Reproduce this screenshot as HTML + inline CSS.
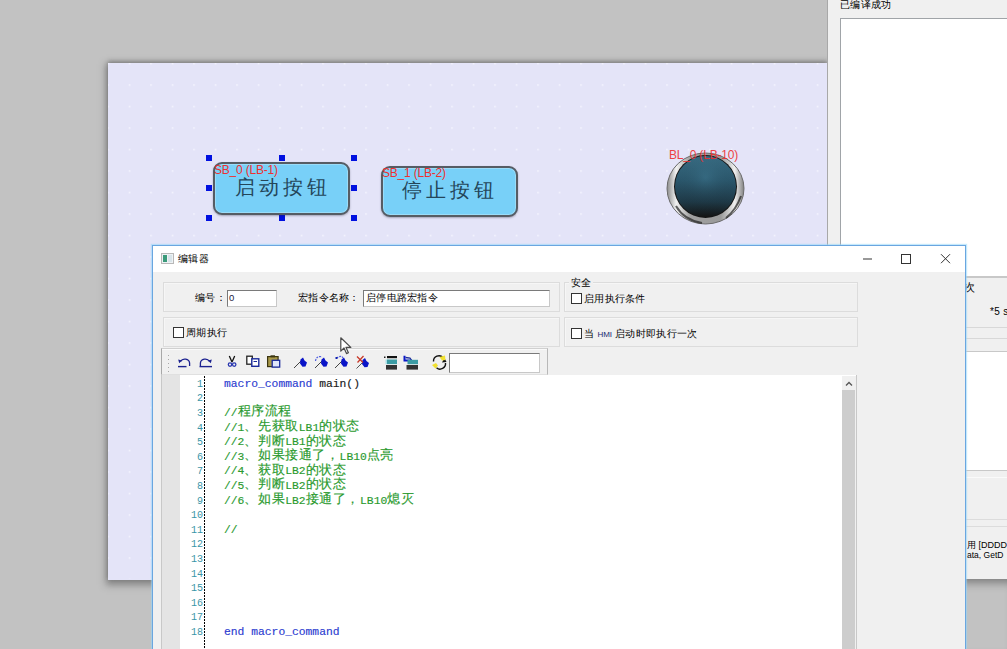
<!DOCTYPE html>
<html><head><meta charset="utf-8">
<style>
*{box-sizing:border-box;margin:0;padding:0}
html,body{width:1007px;height:649px;overflow:hidden}
body{position:relative;background:#c2c2c2;font-family:"Liberation Sans",sans-serif;font-size:11px;color:#000}
.a{position:absolute}
#canvas{left:108px;top:63px;width:719px;height:517px;background-color:#e4e4f8;
 box-shadow:0 3px 7px 2px rgba(70,70,70,.5),0 -2px 4px rgba(60,60,60,.35)}
#rp{left:827px;top:0;width:180px;height:649px;background:#f0f0f0;border-left:1px solid #a8a8a8}
.h{background:#0010e0;width:6px;height:6px}
.btn{border:2px solid #565c64;border-radius:9px;background:#78d0f8;box-shadow:inset 0 0 0 1px #9adcf8,0 1px 2px rgba(40,40,60,.35)}
.btxt{font-size:20px;color:#24465a;letter-spacing:4px;white-space:nowrap}
.lbl{color:#ee3030;font-size:12px;white-space:nowrap;letter-spacing:-0.2px}
#dlg{left:152px;top:245px;width:814px;height:410px;background:#f0f0f0;border:1px solid #7ab4e8}
#title{left:0;top:0;width:812px;height:26px;background:#fff}
.gb{border:1px solid #dcdcdc;box-shadow:inset 1px 1px 0 #f6f6f6}
.inp{background:#fff;border:1px solid #7a7a7a;border-right-color:#c8c8c8;border-bottom-color:#c8c8c8}
.cb{width:11px;height:11px;border:1px solid #333;background:#fff}
.t{white-space:nowrap;color:#000;font-weight:500;font-size:10px;letter-spacing:0.3px}
.ln{left:170px;width:33px;text-align:right;font-family:"Liberation Mono",monospace;font-size:10px;line-height:14.6px;color:#3a96a8}
.code{left:224px;margin-top:-1px;font-family:"Liberation Mono",monospace;font-size:11.33px;line-height:14.6px;white-space:pre;font-weight:normal;-webkit-text-stroke:0.15px currentColor}
.code .b{color:#2c3cd0}.code .k{color:#202020}.code .g{color:#2a9a2e}
.cj{font-size:13px;letter-spacing:0.6px;font-weight:400;line-height:10px;position:relative;top:-0.5px}
</style></head><body>
<div id="canvas" class="a"></div>
<svg class="a" style="left:108px;top:63px" width="719" height="516"><defs><pattern id="dots" x="-0.75" y="-0.25" width="21.5" height="21.5" patternUnits="userSpaceOnUse"><rect x="0" y="0" width="1.5" height="1.5" fill="#f6f6ff"/></pattern></defs><rect width="719" height="516" fill="url(#dots)"/></svg>


<!-- canvas objects -->
<div class="a h" style="left:206px;top:155px"></div>
<div class="a h" style="left:279px;top:155px"></div>
<div class="a h" style="left:351px;top:155px"></div>
<div class="a h" style="left:206px;top:185px"></div>
<div class="a h" style="left:351px;top:185px"></div>
<div class="a h" style="left:206px;top:215px"></div>
<div class="a h" style="left:279px;top:215px"></div>
<div class="a h" style="left:351px;top:215px"></div>
<div class="a btn" style="left:213px;top:162px;width:137px;height:53px"></div>
<div class="a btxt" style="left:235px;top:174px">启动按钮</div>
<svg class="a" style="left:662px;top:148px" width="88" height="82" viewBox="0 0 88 82">
<defs>
<linearGradient id="ring" x1="0" y1="0" x2="1" y2="0">
<stop offset="0" stop-color="#8a8a8a"/><stop offset="0.12" stop-color="#f2f2f2"/><stop offset="0.3" stop-color="#a0a0a0"/>
<stop offset="0.7" stop-color="#9a9a9a"/><stop offset="0.88" stop-color="#f0f0f0"/><stop offset="1" stop-color="#808080"/></linearGradient>
<linearGradient id="ball" x1="0" y1="0" x2="0" y2="1">
<stop offset="0" stop-color="#3a7088"/><stop offset="0.4" stop-color="#2c5a70"/><stop offset="0.75" stop-color="#1f3a48"/><stop offset="1" stop-color="#141414"/></linearGradient>
<radialGradient id="ballr" cx="0.5" cy="0.35" r="0.6">
<stop offset="0" stop-color="#4a8aa4" stop-opacity=".25"/><stop offset="1" stop-color="#000" stop-opacity="0"/></radialGradient>
</defs>
<ellipse cx="43.5" cy="40.5" rx="38.5" ry="35.5" fill="url(#ring)" stroke="#6a6a6a" stroke-width="1"/>
<path d="M14 58 Q22 72 40 75" stroke="#202020" stroke-width="2" fill="none" opacity=".7"/>
<path d="M79 48 Q74 62 64 70" stroke="#202020" stroke-width="2" fill="none" opacity=".7"/>
<circle cx="43.5" cy="38.5" r="31.5" fill="#151515"/>
<circle cx="43.5" cy="38.5" r="30.5" fill="url(#ball)"/>
<circle cx="43.5" cy="38.5" r="30.5" fill="url(#ballr)"/>
</svg>
<div class="a lbl" style="left:669px;top:148px;opacity:.9">BL_0 (LB-10)</div>
<div class="a lbl" style="left:214px;top:163px">SB_0 (LB-1)</div>
<div class="a btn" style="left:381px;top:166px;width:137px;height:51px"></div>
<div class="a btxt" style="left:402px;top:177px">停止按钮</div>
<div class="a lbl" style="left:382px;top:166px">SB_1 (LB-2)</div>


<div id="rp" class="a">
 <div class="a t" style="left:12px;top:-2px;font-size:10px">已编译成功</div>
 <div class="a" style="left:12px;top:18px;width:170px;height:260px;background:#fff;border:1px solid #a0a4a8;border-right:0"></div>
 <div class="a" style="left:0;top:276px;width:180px;height:76px;background:#f0f0f0;border-top:2px solid #c8c8c8;border-bottom:1px solid #c8c8c8"></div>
 <div class="a" style="left:0;top:327px;width:180px;height:1px;background:#d8d8d8"></div>
 <div class="a" style="left:0;top:338px;width:180px;height:1px;background:#d8d8d8"></div>
 <div class="a t" style="left:136px;top:281px;font-size:10.5px">次</div>
 <div class="a t" style="left:162px;top:306px;font-size:10px">*5 s</div>
 <div class="a" style="left:0;top:352px;width:180px;height:118px;background:#fff"></div>
 <div class="a" style="left:0;top:470px;width:180px;height:110px;background:#f0f0f0;border-top:1px solid #c8c8c8"></div>
 <div class="a" style="left:0;top:477px;width:180px;height:1px;background:#fafafa"></div>
 <div class="a" style="left:0;top:519px;width:180px;height:1px;background:#dcdcdc"></div>
 <div class="a" style="left:0;top:526px;width:180px;height:1px;background:#dcdcdc"></div>
 <div class="a t" style="left:139px;top:539px;font-size:9px;letter-spacing:0">用 [DDDD</div>
 <div class="a t" style="left:139px;top:550px;font-size:8.5px;letter-spacing:0">ata, GetD</div>
 <div class="a" style="left:0;top:579px;width:180px;height:70px;background:#c2c2c2;box-shadow:inset 4px 6px 8px -2px rgba(60,60,60,.5)"></div>
</div>

<!-- dialog -->
<div class="a" style="left:152px;top:245px;width:814px;height:420px;background:#f0f0f0;border:1px solid #6aa6e0;box-shadow:0 0 1px 1px rgba(150,215,250,.55)"></div>
<div class="a" style="left:153px;top:246px;width:812px;height:26px;background:#fff"></div>
<div class="a" style="left:161px;top:253px;width:13px;height:11px;border:1px solid #b8b8b8;background:#eef2f4"></div>
<div class="a" style="left:163px;top:255px;width:4px;height:7px;background:#3a9a7a"></div>
<div class="a" style="left:168px;top:255px;width:4px;height:7px;background:#d8e4ea"></div>
<div class="a t" style="left:178px;top:252px">编辑器</div>
<div class="a" style="left:863px;top:258px;width:9px;height:1.5px;background:#999"></div>
<div class="a" style="left:901px;top:254px;width:10px;height:9.5px;border:1.3px solid #333"></div>
<svg class="a" style="left:940px;top:253px" width="11" height="11" viewBox="0 0 11 11"><path d="M1 1.2L10 10.2M10 1.2L1 10.2" stroke="#333" stroke-width="1"/></svg>
<!-- group boxes -->
<div class="a gb" style="left:163px;top:282px;width:397px;height:30px"></div>
<div class="a gb" style="left:163px;top:317px;width:397px;height:30px"></div>
<div class="a gb" style="left:564px;top:282px;width:294px;height:30px"></div>
<div class="a gb" style="left:564px;top:317px;width:294px;height:30px"></div>
<div class="a t" style="left:195px;top:291px">编号：</div>
<div class="a inp" style="left:227px;top:290px;width:50px;height:17px"></div>
<div class="a t" style="left:229px;top:292px;font-size:9.5px;color:#1a1a40">0</div>
<div class="a t" style="left:298px;top:291px">宏指令名称：</div>
<div class="a inp" style="left:363px;top:290px;width:187px;height:17px"></div>
<div class="a t" style="left:366px;top:291px">启停电路宏指令</div>
<div class="a" style="left:569px;top:277px;width:24px;height:12px;background:#f0f0f0"></div>
<div class="a t" style="left:571px;top:276px">安全</div>
<div class="a cb" style="left:571px;top:293px"></div>
<div class="a t" style="left:584px;top:292px">启用执行条件</div>
<div class="a cb" style="left:173px;top:327px"></div>
<div class="a t" style="left:186px;top:326px">周期执行</div>
<div class="a cb" style="left:571px;top:328px"></div>
<div class="a t" style="left:584px;top:327px">当 <span style="font-size:8px;color:#1a2a70;font-weight:normal;letter-spacing:0">HMI</span> 启动时即执行一次</div>
<!-- toolbar -->
<div class="a" style="left:161px;top:348px;width:387px;height:27px;background:#f0f0f0;border:1px solid #d0d0d0;border-left-color:#a8a8a8;border-right-color:#b8b8b8;border-bottom:1px solid #e0e0e0;box-shadow:inset 0 1px 0 #fafafa"></div>
<div class="a inp" style="left:449px;top:353px;width:91px;height:20px"></div>
<svg class="a" style="left:161px;top:349px" width="290" height="26" viewBox="0 0 290 26">
<g fill="#a8a8a8"><rect x="7" y="6" width="1" height="1"/><rect x="7" y="10" width="1" height="1"/><rect x="7" y="14" width="1" height="1"/><rect x="7" y="18" width="1" height="1"/><rect x="7" y="22" width="1" height="1"/></g>
<!-- undo -->
<g stroke="#1c2290" fill="none" stroke-width="1.3">
<path d="M19.5 12.5 A4.8 4.3 0 0 1 28.6 14 L28.6 17"/>
<path d="M17 17.6 H25.5" stroke-width="1.4"/>
</g>
<path d="M17.2 10.5 L21 11.5 L18.2 14.3Z" fill="#1c2290"/>
<!-- redo -->
<g stroke="#1c2290" fill="none" stroke-width="1.3">
<path d="M48.5 12.5 A4.8 4.3 0 0 0 39.4 14 L39.4 17"/>
<path d="M38.5 17.6 H51" stroke-width="1.4"/>
</g>
<path d="M50.8 10.5 L47 11.5 L49.8 14.3Z" fill="#1c2290"/>
<!-- cut -->
<path d="M68.3 7 L71 13 M73.7 7 L71 13" stroke="#111" stroke-width="1.3" fill="none"/>
<circle cx="69" cy="15.6" r="1.7" stroke="#2a38b0" stroke-width="1.3" fill="none"/>
<circle cx="73.2" cy="15.6" r="1.7" stroke="#2a38b0" stroke-width="1.3" fill="none"/>
<!-- copy -->
<rect x="85.8" y="7.2" width="5.5" height="8" fill="#fff" stroke="#222" stroke-width="1.3"/>
<rect x="90.8" y="9.8" width="7" height="7.5" fill="#fff" stroke="#1a2a9a" stroke-width="1.4"/>
<path d="M92.5 12.5 H96" stroke="#1a2a9a" stroke-width="1"/>
<!-- paste -->
<rect x="106.6" y="7.6" width="10.5" height="10" fill="#a89848" stroke="#3a3410" stroke-width="1.2"/>
<rect x="109.5" y="6.3" width="4.5" height="2" fill="#3a3410"/>
<rect x="111.2" y="11.3" width="7.5" height="6.8" fill="#e0e6fa" stroke="#1a2a9a" stroke-width="1.3"/>
<!-- bookmark toggle -->
<path d="M133 19 L141.5 10.5" stroke="#444" stroke-width="1"/>
<path d="M139.5 10.5 L142 8.5 L143.5 11.5 L146 13.5 L144.5 17.5 L141.5 17.8 L139 14.5Z" fill="#0a14c8"/>
<!-- next bookmark -->
<path d="M154 19 L162.5 10.5" stroke="#444" stroke-width="1"/>
<path d="M160.5 10.5 L163 8.5 L164.5 11.5 L167 13.5 L165.5 17.5 L162.5 17.8 L160 14.5Z" fill="#0a14c8"/>
<path d="M154.5 12 Q155 7.5 159.5 7.5 L161 8.5" stroke="#5060e0" stroke-width="1.2" fill="none" stroke-dasharray="2 1"/>
<!-- prev bookmark -->
<path d="M174 19 L182.5 10.5" stroke="#444" stroke-width="1"/>
<path d="M180.5 10.5 L183 8.5 L184.5 11.5 L187 13.5 L185.5 17.5 L182.5 17.8 L180 14.5Z" fill="#0a14c8"/>
<path d="M175.5 9 Q178 7 181 7.5 L182 9" stroke="#5060e0" stroke-width="1.2" fill="none" stroke-dasharray="2 1"/>
<rect x="174.5" y="8" width="2" height="2" fill="#1020b0"/>
<!-- clear bookmarks -->
<path d="M195.5 19.5 L203.5 11.5" stroke="#555" stroke-width="1"/>
<path d="M201.5 11 L204 9 L205.5 12 L208 14 L206.5 18 L203.5 18.3 L201 15Z" fill="#0a14c8"/>
<path d="M196 7.5 L202 13.5 M202.5 7 L196.5 13.5" stroke="#c83a2a" stroke-width="1.3"/>
<!-- indent -->
<rect x="223" y="7.5" width="1.5" height="1.5" fill="#222"/>
<rect x="226" y="7" width="10" height="2.2" fill="#111"/>
<rect x="226" y="10.5" width="10" height="4.6" fill="#3c9ca4"/>
<rect x="224.5" y="10.5" width="1.5" height="4.6" fill="#a8e0e8"/>
<rect x="225" y="16" width="11" height="4.6" fill="#333"/>
<!-- outdent -->
<path d="M243.5 6.8 L243.5 11.5 L250 11.5 L254 14" stroke="#0a18c8" stroke-width="2" fill="none"/>
<path d="M244.5 8.5 L249 9 L251 12" stroke="#1a2a9a" stroke-width="1.3" fill="none"/>
<rect x="246.5" y="10.8" width="10.5" height="4.4" fill="#3c9ca4"/>
<rect x="245.5" y="16" width="11.5" height="4.6" fill="#333"/>
<!-- refresh -->
<path d="M272.5 12.5 A5.5 5.5 0 0 1 282 8.5 M284.5 14 A5.5 5.5 0 0 1 275.5 18.8" stroke="#111" stroke-width="1.4" fill="none"/>
<path d="M283.5 9 L285.5 13 L281 13.5Z" fill="#111"/>
<path d="M278.5 8 L284 6.5 L284.5 11 L281 11.5Z" fill="#f0e030"/>
<path d="M271 16 L274.5 19.5 L277 16.5 L275 14Z" fill="#f0e030"/>
</svg>

<!-- editor -->
<div class="a" style="left:161px;top:375px;width:696px;height:280px;background:#fff;border:1px solid #c8c8c8;border-top:0"></div>
<div class="a" style="left:162px;top:375px;width:18px;height:280px;background:#e4e4e4"></div>
<div class="a" style="left:204px;top:376px;width:1px;height:280px;background:repeating-linear-gradient(#000 0 2px,transparent 2px 3px)"></div>
<div class="a" style="left:842px;top:376px;width:14px;height:280px;background:#f0f0f0"></div>
<div class="a" style="left:842px;top:390px;width:13px;height:262px;background:#cdcdcd"></div>
<svg class="a" style="left:845px;top:381px" width="8" height="6" viewBox="0 0 8 6"><path d="M1 4.5L4 1.5L7 4.5" stroke="#555" stroke-width="1.3" fill="none"/></svg>

<!-- code -->
<div class="a ln" style="top:377.7px">1</div><div class="a code" style="top:377.7px"><span class="b">macro_command</span><span class="k"> main()</span></div>
<div class="a ln" style="top:392.3px">2</div>
<div class="a ln" style="top:406.9px">3</div><div class="a code" style="top:406.9px"><span class="g">//<span class="cj">程序流程</span></span></div>
<div class="a ln" style="top:421.5px">4</div><div class="a code" style="top:421.5px"><span class="g">//1<span class="cj">、先获取</span>LB1<span class="cj">的状态</span></span></div>
<div class="a ln" style="top:436.1px">5</div><div class="a code" style="top:436.1px"><span class="g">//2<span class="cj">、判断</span>LB1<span class="cj">的状态</span></span></div>
<div class="a ln" style="top:450.7px">6</div><div class="a code" style="top:450.7px"><span class="g">//3<span class="cj">、如果接通了，</span>LB10<span class="cj">点亮</span></span></div>
<div class="a ln" style="top:465.3px">7</div><div class="a code" style="top:465.3px"><span class="g">//4<span class="cj">、获取</span>LB2<span class="cj">的状态</span></span></div>
<div class="a ln" style="top:479.9px">8</div><div class="a code" style="top:479.9px"><span class="g">//5<span class="cj">、判断</span>LB2<span class="cj">的状态</span></span></div>
<div class="a ln" style="top:494.5px">9</div><div class="a code" style="top:494.5px"><span class="g">//6<span class="cj">、如果</span>LB2<span class="cj">接通了，</span>LB10<span class="cj">熄灭</span></span></div>
<div class="a ln" style="top:509.1px">10</div>
<div class="a ln" style="top:523.7px">11</div><div class="a code" style="top:523.7px"><span class="g">//</span></div>
<div class="a ln" style="top:538.3px">12</div>
<div class="a ln" style="top:552.9px">13</div>
<div class="a ln" style="top:567.5px">14</div>
<div class="a ln" style="top:582.1px">15</div>
<div class="a ln" style="top:596.7px">16</div>
<div class="a ln" style="top:611.3px">17</div>
<div class="a ln" style="top:625.9px">18</div><div class="a code" style="top:625.9px"><span class="b">end macro_command</span></div>
<svg class="a" style="left:339px;top:336px" width="16" height="20" viewBox="0 0 16 20"><path d="M1.8 1.8 L1.8 15.2 L5 12 L7.5 17.6 L9.4 16.8 L7 11.4 L11.8 11.4Z" fill="#fff" stroke="#4a4a4a" stroke-width="1.2" stroke-linejoin="round"/></svg>
</body></html>
